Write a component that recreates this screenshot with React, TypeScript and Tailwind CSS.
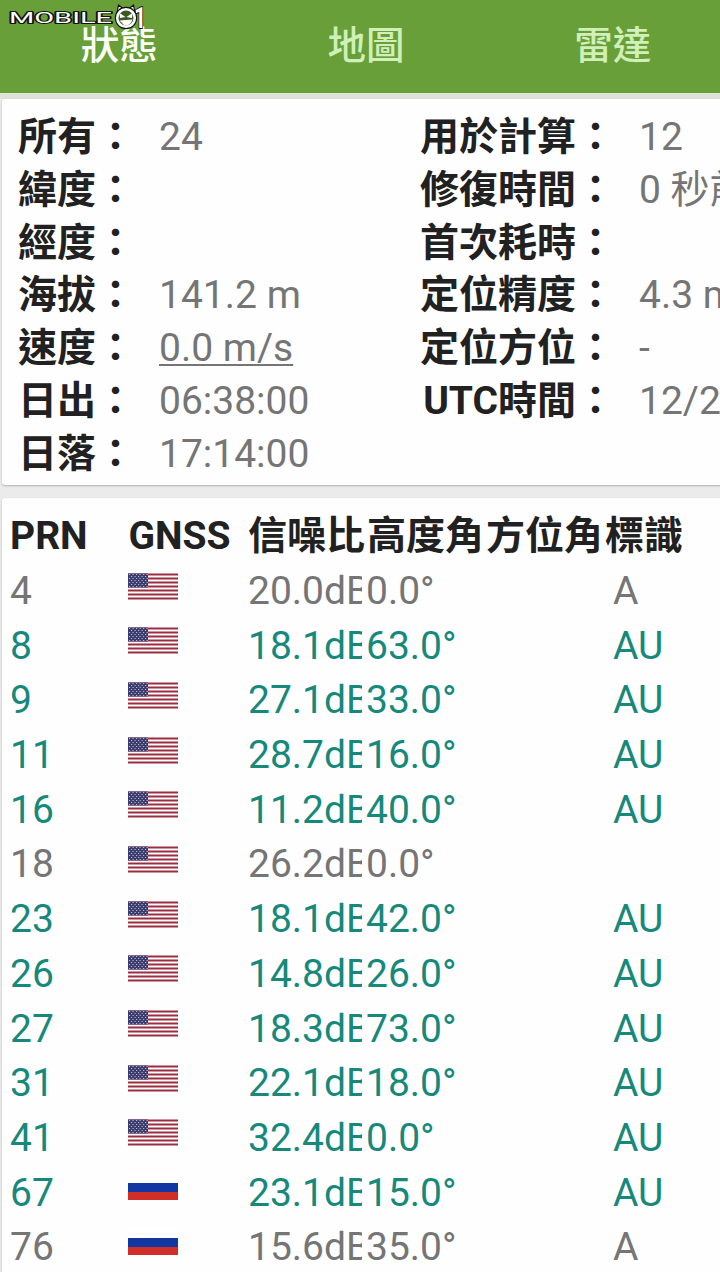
import type { ReactNode } from "react";

type System = "us" | "ru";

type Satellite = {
  prn: number;
  system: System;
  snr: string;
  elevation: string;
  flags?: string;
};

const satellites: Satellite[] = [
  { prn: 4, system: "us", snr: "20.0", elevation: "0.0°", flags: "A" },
  { prn: 8, system: "us", snr: "18.1", elevation: "63.0°", flags: "AU" },
  { prn: 9, system: "us", snr: "27.1", elevation: "33.0°", flags: "AU" },
  { prn: 11, system: "us", snr: "28.7", elevation: "16.0°", flags: "AU" },
  { prn: 16, system: "us", snr: "11.2", elevation: "40.0°", flags: "AU" },
  { prn: 18, system: "us", snr: "26.2", elevation: "0.0°" },
  { prn: 23, system: "us", snr: "18.1", elevation: "42.0°", flags: "AU" },
  { prn: 26, system: "us", snr: "14.8", elevation: "26.0°", flags: "AU" },
  { prn: 27, system: "us", snr: "18.3", elevation: "73.0°", flags: "AU" },
  { prn: 31, system: "us", snr: "22.1", elevation: "18.0°", flags: "AU" },
  { prn: 41, system: "us", snr: "32.4", elevation: "0.0°", flags: "AU" },
  { prn: 67, system: "ru", snr: "23.1", elevation: "15.0°", flags: "AU" },
  { prn: 76, system: "ru", snr: "15.6", elevation: "35.0°", flags: "A" },
];

const App = () => {
  return (
    <main className="relative w-[720px] h-[1272px] overflow-hidden bg-[#ebebeb] font-['Roboto','Noto_Sans_CJK_TC',sans-serif] text-[39px] text-[#757575]">
      <Logo />
      <header className="h-[93px] bg-[#689f38] overflow-hidden">
        <nav className="flex w-[740px] -ml-1 h-[92px] items-center text-center font-medium text-[38.5px] text-[#d0efb9]">
          <p className="flex-1 text-[#fbfff6]">狀態</p>
          <p className="flex-1">地圖</p>
          <p className="flex-1">雷達</p>
        </nav>
      </header>
      <div className="h-[6px] bg-[#e0e0df] border-t border-[#dcebd0]" />

      <Card className="h-[386px] pt-[12.4px] flex">
        <div className="w-[402px] shrink-0 pl-4">
          <Info label="所有" labelWidth="w-[117px]">24</Info>
          <Info label="緯度" labelWidth="w-[117px]" />
          <Info label="經度" labelWidth="w-[117px]" />
          <Info label="海拔" labelWidth="w-[117px]">141.2 m</Info>
          <Info label="速度" labelWidth="w-[117px]">
            <span className="underline decoration-2 underline-offset-[3px] [text-decoration-skip-ink:none]">
              0.0 m/s
            </span>
          </Info>
          <Info label="日出" labelWidth="w-[117px]">06:38:00</Info>
          <Info label="日落" labelWidth="w-[117px]">17:14:00</Info>
        </div>
        <div className="shrink-0 pl-4">
          <Info label="用於計算" labelWidth="w-[195px]">12</Info>
          <Info label="修復時間" labelWidth="w-[195px]">0 秒前</Info>
          <Info label="首次耗時" labelWidth="w-[195px]" />
          <Info label="定位精度" labelWidth="w-[195px]">4.3 m</Info>
          <Info label="定位方位" labelWidth="w-[195px]">-</Info>
          <Info label="UTC時間" labelWidth="w-[195px]">12/2</Info>
        </div>
      </Card>

      <Card className="h-[800px] mt-[13px] pt-[10px]">
        <div className="flex pl-2 h-[55px] leading-[57px] font-bold text-[#212121] whitespace-nowrap">
          <p className="w-[118.5px]">PRN</p>
          <p className="w-[119.5px]">GNSS</p>
          <p className="w-[119px]">信噪比</p>
          <p className="w-[119px]">高度角</p>
          <p className="w-[119px]">方位角</p>
          <p>標識</p>
        </div>
        {satellites.map((sat) => (
          <SatelliteRow key={sat.prn} {...sat} />
        ))}
      </Card>
    </main>
  );
};

type CardProps = {
  className: string;
  children: ReactNode;
};

const Card = ({ className, children }: CardProps) => {
  return (
    <section
      className={`${className} ml-[2px] w-[740px] rounded-[3px] bg-[#fefefe] shadow-[0_1px_2px_rgba(0,0,0,0.25)]`}
    >
      {children}
    </section>
  );
};

type InfoProps = {
  label: string;
  labelWidth: string;
  children?: ReactNode;
};

const Info = ({ label, labelWidth, children }: InfoProps) => {
  return (
    <div className="flex h-[52.7px] leading-[52.7px] whitespace-nowrap">
      <p className={`${labelWidth} text-right font-bold text-[#212121]`}>
        {label}：
      </p>
      <p className="pl-6">{children}</p>
    </div>
  );
};

const SatelliteRow = ({ prn, system, snr, elevation, flags }: Satellite) => {
  return (
    <div
      className={`${
        flags === "AU" ? "text-[#16897b]" : "text-[#757575]"
      } flex pl-2 h-[54.7px] leading-[57.2px] whitespace-nowrap`}
    >
      <p className="w-[118px]">{prn}</p>
      <div className="w-[118px] pt-[9.5px]">
        {system === "us" ? <UsFlag /> : <RuFlag />}
      </div>
      <p className="w-[116px] pl-[2px] overflow-hidden">{snr}dB</p>
      <p className="w-[251px] pl-[4px]">{elevation}</p>
      <p>{flags}</p>
    </div>
  );
};

const UsFlag = () => {
  return (
    <svg width="50" height="27" viewBox="0 0 50 26">
      <rect width="50" height="26" fill="#fff" />
      {[0, 4, 8, 12, 16, 20, 24].map((y) => (
        <rect key={y} y={y} width="50" height="2" fill="#9b2d40" />
      ))}
      <rect width="20" height="14" fill="#3c3b6e" />
      {[1, 3, 5, 7, 9, 11, 13].map((y, i) => (
        <line
          key={y}
          x1={i % 2 ? 3 : 1}
          x2="20"
          y1={y}
          y2={y}
          stroke="#c3c4de"
          strokeWidth="0.9"
          strokeDasharray="1.2 2.3"
        />
      ))}
    </svg>
  );
};

const RuFlag = () => {
  return (
    <div className="w-[50px] h-[26px]">
      <div className="h-[9px] bg-white" />
      <div className="h-[9px] bg-[#1237a0]" />
      <div className="h-[8px] bg-[#cf2f27]" />
    </div>
  );
};

const Logo = () => {
  return (
    <svg
      className="absolute left-0 top-0"
      width="150"
      height="34"
      viewBox="0 0 150 34"
      fontFamily="Roboto, sans-serif"
    >
      <g
        fill="#fff"
        stroke="#111"
        strokeWidth="2"
        strokeLinejoin="round"
        paintOrder="stroke"
      >
        <text
          x="9"
          y="23"
          fontSize="14.5"
          fontWeight="400"
          textLength="103"
          lengthAdjust="spacingAndGlyphs"
        >
          MOBILE
        </text>
        <text
          x="134"
          y="28"
          fontSize="30"
          fontWeight="700"
          textLength="12"
          lengthAdjust="spacingAndGlyphs"
        >
          1
        </text>
      </g>
      {/* horned face standing in for the zero */}
      <path
        d="M117 13 L118.500 5 L123 8.500 Q126 7.500 129 8.500 L133.500 5 L135 13"
        fill="#fff"
        stroke="#111"
        strokeWidth="1.2"
      />
      <circle cx="126" cy="18" r="11.200" fill="#111" />
      <circle cx="126" cy="18" r="8.800" fill="#3c5a24" stroke="#fff" strokeWidth="2.600" />
      <path
        d="M119.500 13 L125.500 17 L120 18 Z M132.500 13 L126.500 17 L132 18 Z"
        fill="#fff"
      />
      <path d="M119.500 20.500 L132.500 19.500 Q130.500 26 124.500 25.500 Z" fill="#fff" />
    </svg>
  );
};

export default App;
